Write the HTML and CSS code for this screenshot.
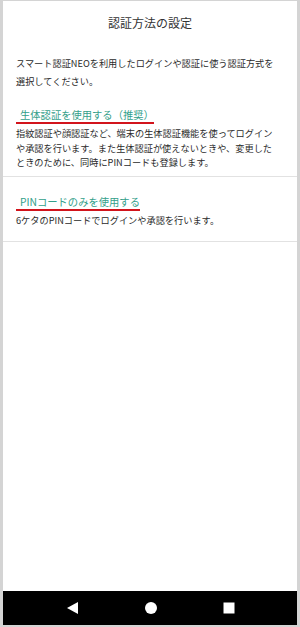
FILE: index.html
```html
<!DOCTYPE html>
<html lang="ja">
<head>
<meta charset="utf-8">
<link rel="stylesheet" href="styles.css">
</head>
<body>
<div class="phone">
  <main class="screen">
    <h1 class="title">認証方法の設定</h1>
    <p class="intro">スマート認証NEOを利用したログインや認証に使う認証方式を選択してください。</p>
    <section class="option">
      <h2 class="opt-title"><span>生体認証を使用する（推奨）</span></h2>
      <p class="opt-desc">指紋認証や顔認証など、端末の生体認証機能を使ってログインや承認を行います。また生体認証が使えないときや、変更したときのために、同時にPINコードも登録します。</p>
    </section>
    <section class="option">
      <h2 class="opt-title"><span>PINコードのみを使用する</span></h2>
      <p class="opt-desc">6ケタのPINコードでログインや承認を行います。</p>
    </section>
  </main>
  <nav class="navbar">
    <svg class="nav-icon" width="12" height="12" viewBox="0 0 12 12"><polygon points="11,0 11,12 0,6" fill="#fff"/></svg>
    <svg class="nav-icon" width="12" height="12" viewBox="0 0 12 12"><circle cx="6" cy="6" r="6" fill="#fff"/></svg>
    <svg class="nav-icon" width="12" height="12" viewBox="0 0 12 12"><rect x="0.5" y="0.5" width="11" height="11" fill="#fff"/></svg>
  </nav>
</div>
</body>
</html>
```
FILE: styles.css
```css
* { box-sizing: border-box; }
html, body { margin: 0; padding: 0; }
body {
  width: 300px;
  height: 627px;
  background: #d4d4d4;
  font-family: "Noto Sans CJK JP", "Noto Sans", sans-serif;
  color: #2a2a2a;
}
.phone {
  height: 627px;
  padding: 1px 3px 2px 3px;
  display: flex;
  flex-direction: column;
}
.screen {
  flex: 1;
  background: #fff;
  display: flex;
  flex-direction: column;
}
.title {
  margin: 0;
  padding-top: 14px;
  font-size: 12px;
  line-height: 16px;
  font-weight: normal;
  text-align: center;
  color: #333;
}
.intro {
  margin: 23px 0 0;
  padding: 0 15px 0 13px;
  font-size: 9.2px;
  line-height: 18px;
  color: #2a2a2a;
}
.option {
  padding: 18px 0 6px;
  border-bottom: 1px solid #e2e2e2;
}
.option:last-child {
  padding-bottom: 14px;
}
.opt-title {
  margin: 0 0 0 13px;
  font-size: 10.3px;
  line-height: 14px;
  font-weight: normal;
  color: #33a08a;
}
.opt-title span {
  display: inline-block;
  padding-left: 4px;
  border-bottom: 2px solid #d2141c;
}
.opt-desc {
  margin: 2px 0 0;
  padding: 0 18px 0 13px;
  font-size: 9.2px;
  line-height: 14.5px;
  color: #2a2a2a;
}
.navbar {
  height: 34px;
  background: #000;
  display: flex;
  align-items: center;
  justify-content: space-between;
  padding: 0 62px 0 64px;
}
.nav-icon { display: block; }
```
